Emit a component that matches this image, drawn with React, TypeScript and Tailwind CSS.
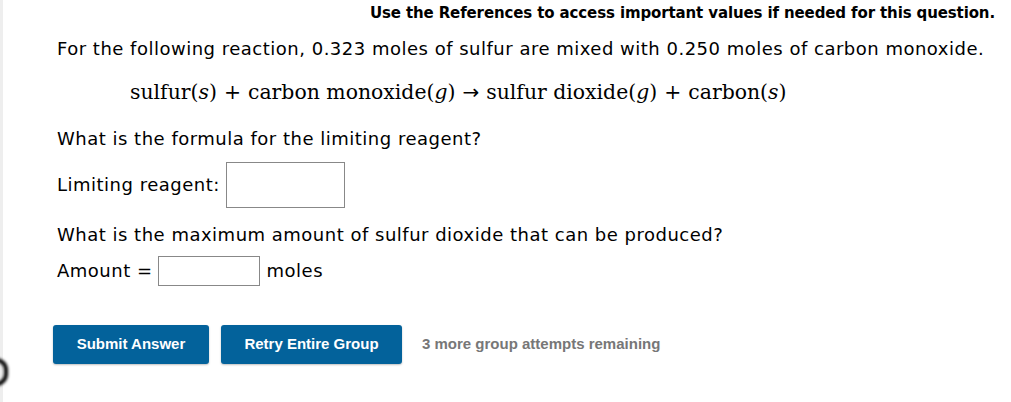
export default function App() {
  return (
    <div className="relative h-[402px] w-[1011px] overflow-hidden bg-white font-['DejaVu_Sans',sans-serif] text-black">
      <div className="absolute left-0 top-0 h-full w-[3px] bg-[#eeeeee]" />
      <div
        className="absolute left-[-16px] top-[358px] h-[28px] w-[24px] rounded-full border-[4px] border-black blur-[1.5px]"
        aria-hidden
      />

      <div className="flex justify-end pr-[16px] pt-[4px]">
        <p className="text-[15px] font-bold leading-[18px] tracking-[-0.12px]">
          Use the References to access important values if needed for this question.
        </p>
      </div>

      <div className="pl-[57px] tracking-[0.5px]">
        <p className="mt-[16px] text-[18px] leading-[22px]">
          For the following reaction, 0.323 moles of sulfur are mixed with 0.250 moles of carbon monoxide.
        </p>

        <p className="ml-[73px] mt-[20px] flex items-baseline font-['DejaVu_Serif',serif] text-[20.4px] leading-[24px] tracking-normal">
          <span>sulfur(<i>s</i>)</span>
          <span className="mx-[7px]">+</span>
          <span>carbon monoxide(<i>g</i>)</span>
          <span className="mx-[7px] font-['DejaVu_Sans',sans-serif] text-[20px]">→</span>
          <span>sulfur dioxide(<i>g</i>)</span>
          <span className="mx-[7px]">+</span>
          <span>carbon(<i>s</i>)</span>
        </p>

        <p className="mt-[24px] text-[18px] leading-[22px]">What is the formula for the limiting reagent?</p>

        <div className="mt-[12px] flex items-center gap-[6px]">
          <span className="text-[18px] leading-[22px]">Limiting reagent:</span>
          <input type="text" className="h-[46px] w-[119px] border border-[#888] bg-white" />
        </div>

        <p className="mt-[16px] text-[18px] leading-[22px]">
          What is the maximum amount of sulfur dioxide that can be produced?
        </p>

        <div className="mt-[10px] flex items-center">
          <span className="text-[18px] leading-[22px]">Amount =</span>
          <input type="text" className="ml-[5px] h-[30px] w-[102px] border border-[#888] bg-white" />
          <span className="ml-[7px] text-[18px] leading-[22px]">moles</span>
        </div>

        <div className="-ml-[4px] mt-[39px] flex items-center gap-[12px] font-['Liberation_Sans',sans-serif] text-[15px] font-bold tracking-normal">
          <button className="h-[39px] w-[156px] rounded-[3px] bg-[#03629b] text-white shadow-[0_1px_2px_rgba(0,0,0,0.25)]">
            Submit Answer
          </button>
          <button className="h-[39px] w-[181px] rounded-[3px] bg-[#03629b] text-white shadow-[0_1px_2px_rgba(0,0,0,0.25)]">
            Retry Entire Group
          </button>
          <span className="ml-[8px] text-[#777]">3 more group attempts remaining</span>
        </div>
      </div>
    </div>
  );
}
